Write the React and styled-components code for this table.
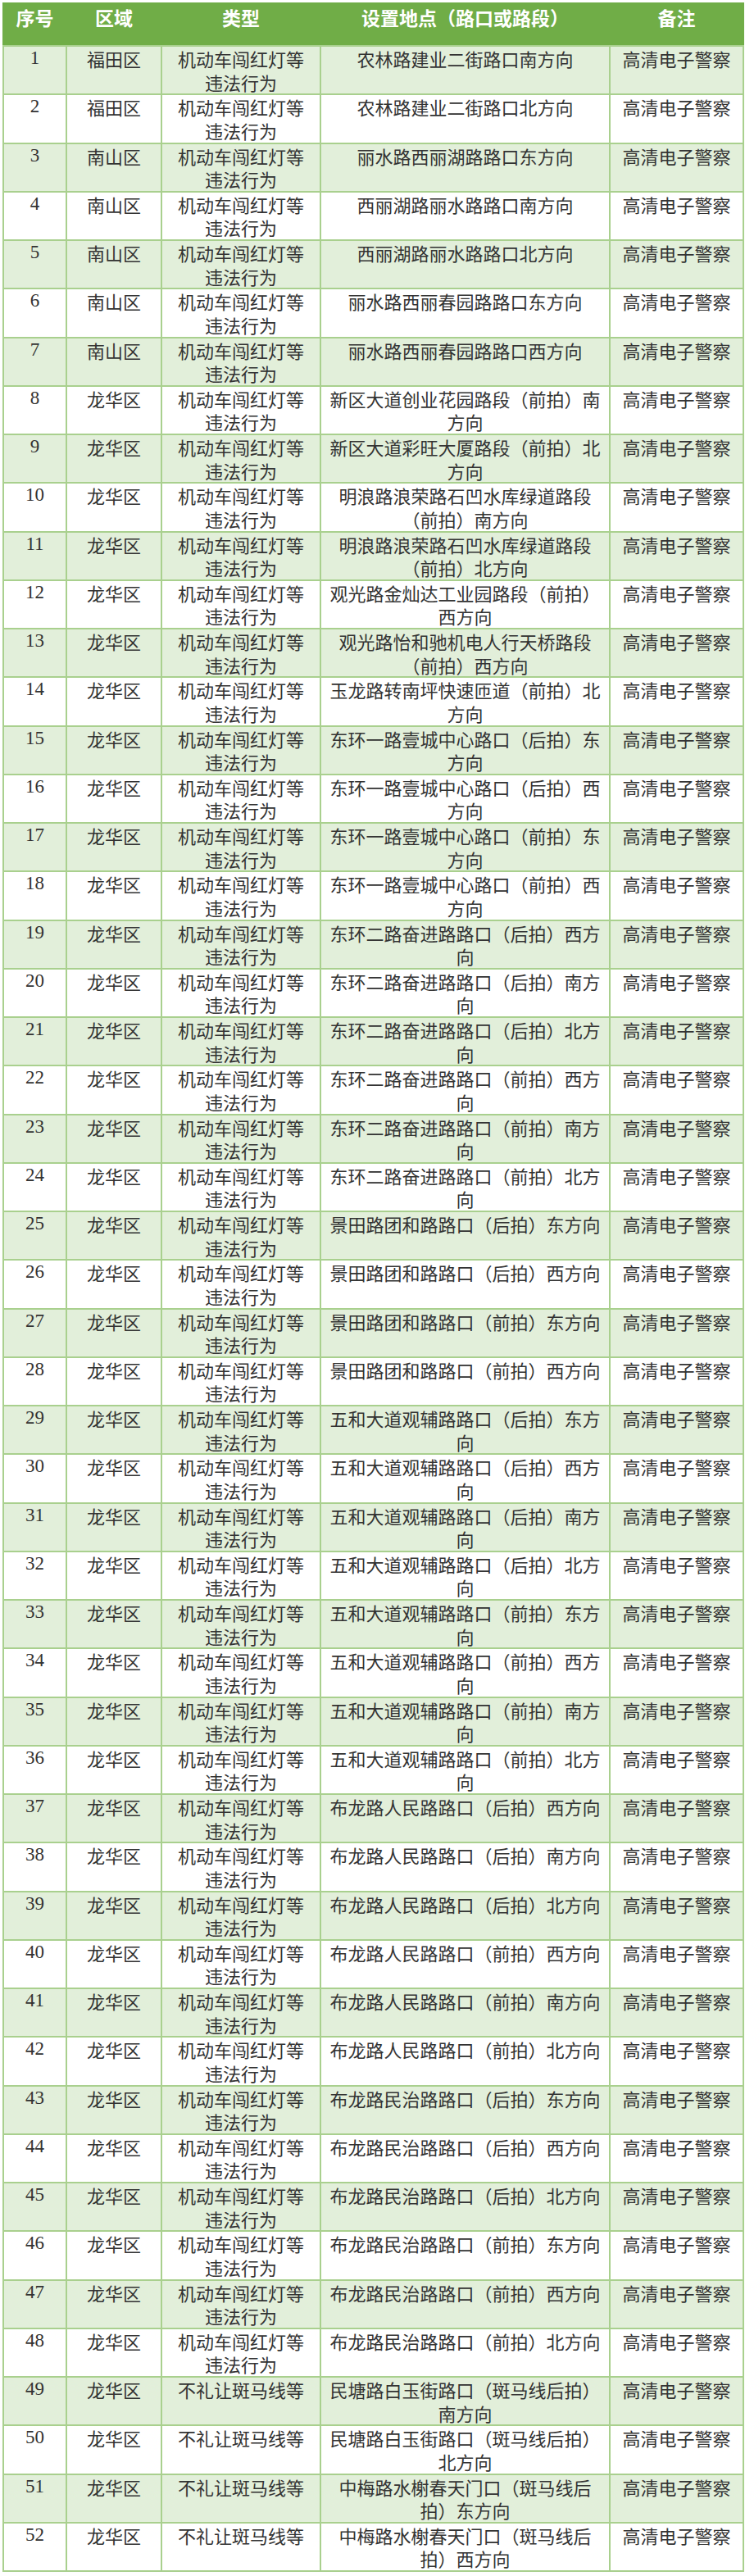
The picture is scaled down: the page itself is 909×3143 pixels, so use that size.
import React from 'react';
import styled, { createGlobalStyle } from 'styled-components';

const GlobalStyle = createGlobalStyle`
  html, body {
    margin: 0;
    padding: 0;
    background: #ffffff;
  }
  body {
    font-family: "Noto Sans CJK SC", "Liberation Serif", sans-serif;
  }
`;

const RED = '机动车闯红灯等\n违法行为';
const ZEBRA = '不礼让斑马线等';

const rows = [
  ['福田区', RED, '农林路建业二街路口南方向'],
  ['福田区', RED, '农林路建业二街路口北方向'],
  ['南山区', RED, '丽水路西丽湖路路口东方向'],
  ['南山区', RED, '西丽湖路丽水路路口南方向'],
  ['南山区', RED, '西丽湖路丽水路路口北方向'],
  ['南山区', RED, '丽水路西丽春园路路口东方向'],
  ['南山区', RED, '丽水路西丽春园路路口西方向'],
  ['龙华区', RED, '新区大道创业花园路段（前拍）南\n方向'],
  ['龙华区', RED, '新区大道彩旺大厦路段（前拍）北\n方向'],
  ['龙华区', RED, '明浪路浪荣路石凹水库绿道路段\n（前拍）南方向'],
  ['龙华区', RED, '明浪路浪荣路石凹水库绿道路段\n（前拍）北方向'],
  ['龙华区', RED, '观光路金灿达工业园路段（前拍）\n西方向'],
  ['龙华区', RED, '观光路怡和驰机电人行天桥路段\n（前拍）西方向'],
  ['龙华区', RED, '玉龙路转南坪快速匝道（前拍）北\n方向'],
  ['龙华区', RED, '东环一路壹城中心路口（后拍）东\n方向'],
  ['龙华区', RED, '东环一路壹城中心路口（后拍）西\n方向'],
  ['龙华区', RED, '东环一路壹城中心路口（前拍）东\n方向'],
  ['龙华区', RED, '东环一路壹城中心路口（前拍）西\n方向'],
  ['龙华区', RED, '东环二路奋进路路口（后拍）西方\n向'],
  ['龙华区', RED, '东环二路奋进路路口（后拍）南方\n向'],
  ['龙华区', RED, '东环二路奋进路路口（后拍）北方\n向'],
  ['龙华区', RED, '东环二路奋进路路口（前拍）西方\n向'],
  ['龙华区', RED, '东环二路奋进路路口（前拍）南方\n向'],
  ['龙华区', RED, '东环二路奋进路路口（前拍）北方\n向'],
  ['龙华区', RED, '景田路团和路路口（后拍）东方向'],
  ['龙华区', RED, '景田路团和路路口（后拍）西方向'],
  ['龙华区', RED, '景田路团和路路口（前拍）东方向'],
  ['龙华区', RED, '景田路团和路路口（前拍）西方向'],
  ['龙华区', RED, '五和大道观辅路路口（后拍）东方\n向'],
  ['龙华区', RED, '五和大道观辅路路口（后拍）西方\n向'],
  ['龙华区', RED, '五和大道观辅路路口（后拍）南方\n向'],
  ['龙华区', RED, '五和大道观辅路路口（后拍）北方\n向'],
  ['龙华区', RED, '五和大道观辅路路口（前拍）东方\n向'],
  ['龙华区', RED, '五和大道观辅路路口（前拍）西方\n向'],
  ['龙华区', RED, '五和大道观辅路路口（前拍）南方\n向'],
  ['龙华区', RED, '五和大道观辅路路口（前拍）北方\n向'],
  ['龙华区', RED, '布龙路人民路路口（后拍）西方向'],
  ['龙华区', RED, '布龙路人民路路口（后拍）南方向'],
  ['龙华区', RED, '布龙路人民路路口（后拍）北方向'],
  ['龙华区', RED, '布龙路人民路路口（前拍）西方向'],
  ['龙华区', RED, '布龙路人民路路口（前拍）南方向'],
  ['龙华区', RED, '布龙路人民路路口（前拍）北方向'],
  ['龙华区', RED, '布龙路民治路路口（后拍）东方向'],
  ['龙华区', RED, '布龙路民治路路口（后拍）西方向'],
  ['龙华区', RED, '布龙路民治路路口（后拍）北方向'],
  ['龙华区', RED, '布龙路民治路路口（前拍）东方向'],
  ['龙华区', RED, '布龙路民治路路口（前拍）西方向'],
  ['龙华区', RED, '布龙路民治路路口（前拍）北方向'],
  ['龙华区', ZEBRA, '民塘路白玉街路口（斑马线后拍）\n南方向'],
  ['龙华区', ZEBRA, '民塘路白玉街路口（斑马线后拍）\n北方向'],
  ['龙华区', ZEBRA, '中梅路水榭春天门口（斑马线后\n拍）东方向'],
  ['龙华区', ZEBRA, '中梅路水榭春天门口（斑马线后\n拍）西方向'],
];

const headers = ['序号', '区域', '类型', '设置地点（路口或路段）', '备注'];
const widths = [77, 116, 194, 353, 163];

export default function App() {
  return (
    <>
      <GlobalStyle />
      <Page>
        <Table>
          <colgroup>
            {widths.map((w, i) => (
              <col key={i} style={{ width: w }} />
            ))}
          </colgroup>
          <thead>
            <tr>
              {headers.map((h) => (
                <HeadCell key={h}>{h}</HeadCell>
              ))}
            </tr>
          </thead>
          <tbody>
            {rows.map(([area, type, place], i) => (
              <Row key={i} $odd={i % 2 === 0}>
                <Cell>
                  <Num>{i + 1}</Num>
                </Cell>
                <Cell>{area}</Cell>
                <Cell>{type}</Cell>
                <Cell>{place}</Cell>
                <Cell>高清电子警察</Cell>
              </Row>
            ))}
          </tbody>
        </Table>
      </Page>
    </>
  );
}

const Page = styled.div`
  padding: 3px 3px 9px 3px;
  width: 903px;
`;

const Table = styled.table`
  width: 903px;
  table-layout: fixed;
  border-collapse: collapse;
  border: 2px solid #a9d08e;
`;

const HeadCell = styled.th`
  height: 48px;
  padding: 2px 0 0 0;
  vertical-align: top;
  background: #70ad47;
  color: #ffffff;
  font-size: 23px;
  font-weight: 700;
  line-height: 29px;
  text-align: center;
  border: 2px solid #70ad47;
  border-bottom-color: #a9d08e;
`;

const Row = styled.tr`
  background: ${(p) => (p.$odd ? '#e2efda' : '#ffffff')};
`;

const Cell = styled.td`
  height: 57.25px;
  padding: 0 4px;
  vertical-align: top;
  text-align: center;
  white-space: pre-line;
  font-size: 22px;
  line-height: 28.6px;
  color: #333333;
  border: 2px solid #a9d08e;
  overflow: hidden;
`;

const Num = styled.span`
  display: inline-block;
  font-family: "Liberation Serif", serif;
  font-size: 23px;
  line-height: 28.6px;
  vertical-align: top;
`;
